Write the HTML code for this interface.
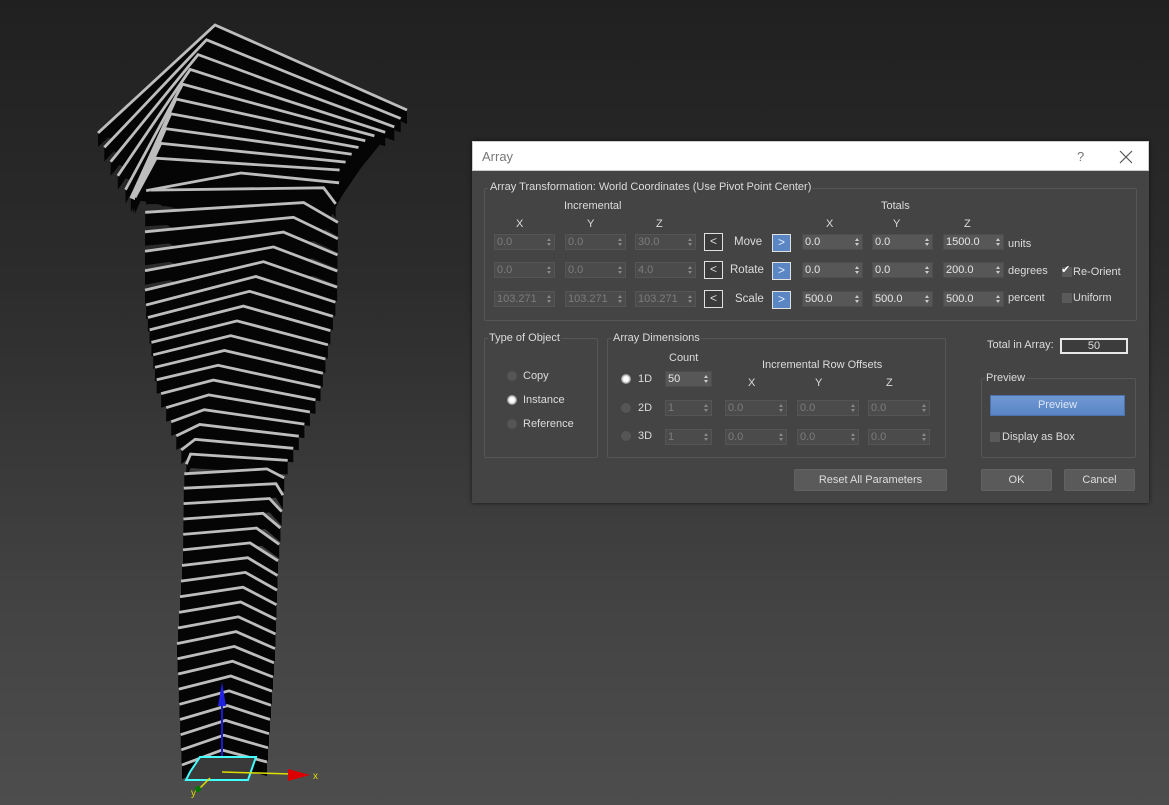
<!DOCTYPE html>
<html><head><meta charset="utf-8"><style>
*{margin:0;padding:0;box-sizing:border-box}
body{width:1169px;height:805px;overflow:hidden;background:linear-gradient(#202020 0%,#2c2c2c 35%,#434343 75%,#4d4d4d 100%);font-family:"Liberation Sans",sans-serif;font-size:11px;color:#dcdcdc;position:relative}
.a{position:absolute;white-space:nowrap}
#dlg{position:absolute;left:472px;top:141px;width:677px;height:362px;background:#444;box-shadow:0 0 4px rgba(0,0,0,.6)}
#tb{position:absolute;left:0;top:0;width:677px;height:30px;background:#fff;border:1px solid #ccc}
.grp{position:absolute;border:1px solid #565656;border-radius:2px}
.sp{position:absolute;height:16px;background:#575757;border:1px solid #4d4d4d;color:#e6e6e6;font-size:11px;line-height:14px;padding-left:2px}
.sp.d{background:#4b4b4b;color:#7c7c7c;border-color:#555}
.sp i{position:absolute;right:3px;top:3px;width:0;height:0;border-left:2.5px solid transparent;border-right:2.5px solid transparent;border-bottom:3px solid #ccc}
.sp b{position:absolute;right:3px;top:8px;width:0;height:0;border-left:2.5px solid transparent;border-right:2.5px solid transparent;border-top:3px solid #ccc}
.sp.d i{border-bottom-color:#888}.sp.d b{border-top-color:#888}
.bl{position:absolute;width:19px;height:18px;border:1px solid #e0e0e0;background:#3a3a3a;color:#ddd;text-align:center;line-height:15px;font-size:12px}
.br{position:absolute;width:19px;height:18px;border:1px solid #e0e0e0;background:#5b86c4;color:#e8eefc;text-align:center;line-height:15px;font-size:12px}
.btn{position:absolute;height:22px;background:#5a5a5a;border:1px solid #626262;border-radius:2px;text-align:center;line-height:20px;color:#ddd}
.rad{position:absolute;width:10px;height:10px;border-radius:50%;background:#555}
.rad.on{background:radial-gradient(#fff 35%,#888 70%)}
.cb{position:absolute;width:10px;height:10px;background:#5a5a5a}
</style></head><body>
<svg id="tw" width="1169" height="805" style="position:absolute;left:0;top:0"></svg>
<div id="dlg">
<div id="tb"><span class="a" style="left:9px;top:7px;font-size:13px;color:#777">Array</span><span class="a" style="left:604px;top:7px;font-size:13px;color:#777">?</span>
<svg class="a" style="left:646px;top:8px" width="14" height="14"><path d="M1 1L13 13M13 1L1 13" stroke="#555" stroke-width="1.2"/></svg></div>
<div class="grp" style="left:12px;top:47px;width:653px;height:133px"></div>
<span class="a" style="left:16px;top:40px;background:#444;padding:0 2px">Array Transformation: World Coordinates (Use Pivot Point Center)</span>
<span class="a" style="left:92px;top:59px">Incremental</span>
<span class="a" style="left:44px;top:77px">X</span><span class="a" style="left:115px;top:77px">Y</span><span class="a" style="left:184px;top:77px">Z</span>
<span class="a" style="left:409px;top:59px">Totals</span>
<span class="a" style="left:354px;top:77px">X</span><span class="a" style="left:421px;top:77px">Y</span><span class="a" style="left:492px;top:77px">Z</span>
<div id="rows"></div>
<span class="a" style="left:536px;top:97px">units</span><span class="a" style="left:536px;top:124px">degrees</span><span class="a" style="left:536px;top:151px">percent</span>
<div class="cb" style="left:590px;top:126px"></div><span class="a" style="left:589px;top:122px;font-size:11px;color:#fff">✔</span><span class="a" style="left:601px;top:125px">Re-Orient</span>
<div class="cb" style="left:590px;top:152px"></div><span class="a" style="left:601px;top:151px">Uniform</span>

<div class="grp" style="left:12px;top:197px;width:114px;height:120px"></div>
<span class="a" style="left:16px;top:191px;background:#444;padding:0 1px">Type of Object</span>
<div class="rad" style="left:35px;top:230px"></div><span class="a" style="left:51px;top:229px">Copy</span>
<div class="rad on" style="left:35px;top:254px"></div><span class="a" style="left:51px;top:253px">Instance</span>
<div class="rad" style="left:35px;top:278px"></div><span class="a" style="left:51px;top:277px">Reference</span>

<div class="grp" style="left:135px;top:197px;width:339px;height:120px"></div>
<span class="a" style="left:140px;top:191px;background:#444;padding:0 1px">Array Dimensions</span>
<span class="a" style="left:197px;top:211px">Count</span>
<span class="a" style="left:290px;top:218px">Incremental Row Offsets</span>
<span class="a" style="left:276px;top:236px">X</span><span class="a" style="left:343px;top:236px">Y</span><span class="a" style="left:414px;top:236px">Z</span>
<div class="rad on" style="left:149px;top:233px"></div><span class="a" style="left:166px;top:232px">1D</span>
<div class="rad" style="left:149px;top:262px"></div><span class="a" style="left:166px;top:261px">2D</span>
<div class="rad" style="left:149px;top:290px"></div><span class="a" style="left:166px;top:289px">3D</span>
<div id="rows2"></div>
<div class="btn" style="left:322px;top:328px;width:153px">Reset All Parameters</div>

<span class="a" style="left:515px;top:198px">Total in Array:</span>
<div class="a" style="left:588px;top:197px;width:68px;height:16px;border:2px solid #e8e8e8;background:#3c3c3c;text-align:center;line-height:12px">50</div>
<div class="grp" style="left:509px;top:237px;width:155px;height:80px"></div>
<span class="a" style="left:513px;top:231px;background:#444;padding:0 1px">Preview</span>
<div class="a" style="left:518px;top:254px;width:135px;height:21px;background:linear-gradient(#6f97d2,#5a86c6);border:1px solid #4b72ab;text-align:center;line-height:19px;color:#dde6f5">Preview</div>
<div class="cb" style="left:518px;top:291px"></div><span class="a" style="left:530px;top:290px">Display as Box</span>
<div class="btn" style="left:509px;top:328px;width:71px">OK</div>
<div class="btn" style="left:592px;top:328px;width:71px">Cancel</div>
</div>
<script>
function sp(l,t,w,v,d){return '<div class="sp'+(d?' d':'')+'" style="left:'+l+'px;top:'+t+'px;width:'+w+'px">'+v+'<i></i><b></b></div>';}
var h='',tops=[93,121,150],inc=[['0.0','0.0','30.0'],['0.0','0.0','4.0'],['103.271','103.271','103.271']],
tot=[['0.0','0.0','1500.0'],['0.0','0.0','200.0'],['500.0','500.0','500.0']],lab=['Move','Rotate','Scale'],lx=[262,258,263];
for(var r=0;r<3;r++){var t=tops[r];
[22,93,163].forEach(function(x,k){h+=sp(x,t,61,inc[r][k],1)});
h+='<div class="bl" style="left:232px;top:'+(t-1)+'px">&lt;</div>';
h+='<span class="a" style="left:'+lx[r]+'px;top:'+(t+2)+'px;font-size:11.5px">'+lab[r]+'</span>';
h+='<div class="br" style="left:300px;top:'+(t)+'px">&gt;</div>';
[330,400,471].forEach(function(x,k){h+=sp(x,t,61,tot[r][k],0)});}
document.getElementById('rows').innerHTML=h;
h=sp(193,230,47,'50',0);
[259,288].forEach(function(t){h+=sp(193,t,47,'1',1);[253,325,396].forEach(function(x){h+=sp(x,t,62,'0.0',1)})});
document.getElementById('rows2').innerHTML=h;
var K=[[25,215,-117,108,192,85],[60,195,-82,107,197,70],[93,178,-48,105,190,45],[130,165,-30,70,186,25],[162,155,-20,35,183,10],[172,157,-18,32,185,6],
[174,332,-178,2,4,14],[183,330,-178,0,5,15],[203,303,-158,10,35,20],[267,260,-115,30,77,26],[368,217,-60,14,103,22],[456,190,-3,10,97,6],[463,188,-2,10,97,4],
[470,282,-98,4,2,10],[543,250,-67,7,28,18],[632,236,-59,12,39,17],[750,222,-40,15,45,12]];
function kf(y){for(var k=0;k<K.length-1;k++){if(y<=K[k+1][0]){var f=(y-K[k][0])/(K[k+1][0]-K[k][0]);return K[k].map(function(v,j){return v+f*(K[k+1][j]-v)});}}return K[K.length-1];}
var s='',N=50;
function f(p){return p[0].toFixed(1)+','+p[1].toFixed(1)}
for(var i=0;i<N;i++){
var y=25+i*(725/(N-1));var k=kf(y);
var P=[k[1],y],L=[k[1]+k[2],y+k[3]],R=[k[1]+k[4],y+k[5]],B=[L[0]+R[0]-P[0],L[1]+R[1]-P[1]];
var d=14;
s+='<polygon points="'+[P,R,B,L].map(f).join(' ')+'" fill="#050505"/>';
s+='<polygon points="'+[L,P,R,[R[0],R[1]+d],[P[0],P[1]+d],[L[0],L[1]+d]].map(f).join(' ')+'" fill="#050505"/>';
s+='<polyline points="'+[L,P,R].map(f).join(' ')+'" fill="none" stroke="#bdbdbd" stroke-width="2.8" stroke-linejoin="miter"/>';
}
s+='<line x1="222" y1="765" x2="222" y2="690" stroke="#1a1ad0" stroke-width="2"/><polygon points="218,706 222,682 226,706" fill="#2020e0"/>';
s+='<polygon points="190,772 200,757 256,757 248,780 186,780" fill="#3a3a3a" stroke="#4ff" stroke-width="2"/>';
s+='<line x1="222" y1="772" x2="292" y2="774" stroke="#dd0" stroke-width="1.5"/><polygon points="288,769 310,775 288,781" fill="#d00"/>';
s+='<line x1="210" y1="778" x2="198" y2="790" stroke="#dd0" stroke-width="1.5"/><circle cx="198" cy="789" r="3" fill="#070"/>';
s+='<text x="313" y="779" fill="#dd0" font-size="10" font-family="Liberation Sans">x</text><text x="191" y="796" fill="#dd0" font-size="10" font-family="Liberation Sans">y</text>';
document.getElementById('tw').innerHTML=s;
</script>
</body></html>
